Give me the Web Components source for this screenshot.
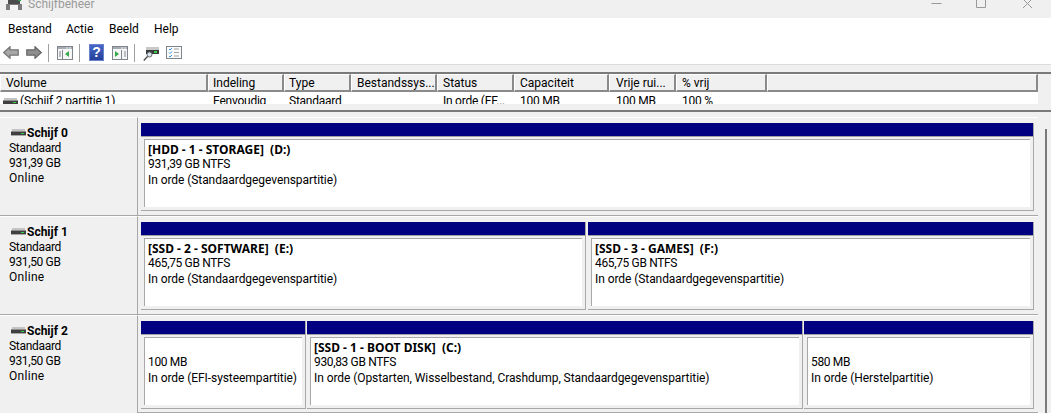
<!DOCTYPE html>
<html lang="nl"><head><meta charset="utf-8"><title>Schijfbeheer</title>
<style>
html,body{margin:0;padding:0;height:413px;overflow:hidden;background:#f0f0f0}
body{font:12px/15px Roboto,"Noto Sans",sans-serif;color:#000;display:flex;flex-direction:column}
</style></head><body>
<dm-titlebar label="Schijfbeheer"></dm-titlebar>
<dm-menubar></dm-menubar>
<dm-toolbar></dm-toolbar>
<dm-volume-table></dm-volume-table>
<dm-disk-pane>
  <dm-disk name="Schijf 0" size="931,39 GB" cols="893px">
    <dm-partition title-text="[HDD - 1 - STORAGE]  (D:)" size="931,39 GB NTFS" status="In orde (Standaardgegevenspartitie)"></dm-partition>
  </dm-disk>
  <dm-disk name="Schijf 1" size="931,50 GB" cols="445px 446px" gap="2px">
    <dm-partition title-text="[SSD - 2 - SOFTWARE]  (E:)" size="465,75 GB NTFS" status="In orde (Standaardgegevenspartitie)"></dm-partition>
    <dm-partition title-text="[SSD - 3 - GAMES]  (F:)" size="465,75 GB NTFS" status="In orde (Standaardgegevenspartitie)"></dm-partition>
  </dm-disk>
  <dm-disk name="Schijf 2" size="931,50 GB" cols="165px 496px 230px">
    <dm-partition size="100 MB" status="In orde (EFI-systeempartitie)"></dm-partition>
    <dm-partition title-text="[SSD - 1 - BOOT DISK]  (C:)" size="930,83 GB NTFS" status="In orde (Opstarten, Wisselbestand, Crashdump, Standaardgegevenspartitie)"></dm-partition>
    <dm-partition size="580 MB" status="In orde (Herstelpartitie)"></dm-partition>
  </dm-disk>
</dm-disk-pane>
<script>
const DISK_ICON=`<svg width="15" height="7" viewBox="0 0 15 7"><rect x="1" y="0" width="13" height="2" fill="#c4c4c4"/><rect x="0" y="2" width="15" height="1" fill="#8c8c8c"/><rect x="0" y="3" width="15" height="3" fill="#3f3f3f"/><rect x="10" y="4" width="3" height="1" fill="#38d048"/><rect x="0" y="6" width="15" height="1" fill="#a8a8a8"/></svg>`;
function el(name,render){customElements.define(name,class extends HTMLElement{connectedCallback(){if(this.shadowRoot)return;this.attachShadow({mode:'open'}).innerHTML=render(this)}})}

el('dm-titlebar',h=>`<style>
:host{display:flex;height:18px;overflow:hidden;background:#f0f0f0;flex:none;color:#9a9a9a}
.ic{margin:0 0 0 6px;flex:none}
.t{margin:-3px 0 0 6px;flex:1}
.b{width:45.5px;display:flex;justify-content:center;flex:none}
svg{display:block}
</style>
<svg class="ic" width="16" height="10" viewBox="0 0 16 10"><rect x="2" y="0" width="12" height="4" fill="#4c4c4c"/><rect x="12" y="0" width="3" height="1" fill="#2f9f4f"/><rect x="0" y="4" width="16" height="6" fill="#7c7c7c"/><rect x="4" y="5" width="8" height="5" fill="#f6f6f6"/></svg>
<span class="t">${h.getAttribute('label')}</span>
<span class="b" style="width:46px"><svg width="11" height="8" viewBox="0 0 11 8"><path d="M0.5 3.5h10" stroke="#999" fill="none"/></svg></span>
<span class="b"><svg width="11" height="8" viewBox="0 0 11 8"><path d="M.5 0v7.500h9V0" stroke="#999" fill="none"/></svg></span>
<span class="b" style="margin-right:1px"><svg width="11" height="9" viewBox="0 0 11 9"><path d="M1 -1l9 9M10 -1l-9 9" stroke="#999" fill="none"/></svg></span>`);

el('dm-menubar',h=>`<style>
:host{display:flex;height:23px;background:#fff;flex:none;align-items:center;padding-left:8px}
span{flex:none}
</style><span style="width:58px">Bestand</span><span style="width:43px">Actie</span><span style="width:45px">Beeld</span><span>Help</span>`);

el('dm-toolbar',h=>{
const win=(arrow)=>`<svg width="16" height="14" viewBox="0 0 16 14"><rect x=".5" y=".5" width="15" height="13" fill="#f6f6f6" stroke="#7f858c"/><rect x="1" y="1" width="14" height="2" fill="#a6acb4"/><path d="M9 2h2M12 2h2" stroke="#eee"/>${arrow}</svg>`;
return `<style>
:host{display:flex;height:23px;background:#fff;flex:none;align-items:center;padding-left:3px;border-bottom:1px solid #dcdcdc}
svg{display:block;flex:none}
.s{width:1px;height:18px;background:#a0a0a0;flex:none}
.h{width:13px;height:15px;flex:none;background:linear-gradient(#4567c8,#24409a);outline:1px solid #6a82cc;color:#fff;font:bold 14px/15px "Liberation Sans",sans-serif;text-align:center;margin:0 9px 0 10px}
</style>
<svg width="16" height="13" viewBox="0 0 16 13"><path d="M.8 6.500L7 .8V3.800H15.200V9.200H7V12.200Z" fill="#a8a8a8" stroke="#767676" stroke-width="1.300"/></svg>
<svg style="margin-left:7px" width="16" height="13" viewBox="0 0 16 13"><path d="M15.200 6.500L9 .8V3.800H.8V9.200H9V12.200Z" fill="#8e8e8e" stroke="#6a6a6a" stroke-width="1.300"/></svg>
<span class="s" style="margin-left:6px"></span>
<span style="margin-left:8px">${win(`<path d="M5.500 4v9M2 6h2M2 8h2M2 10h2" stroke="#7f858c" fill="none"/><path d="M12 5v6L8 8z" fill="#35a848"/>`)}</span>
<span class="s" style="margin-left:6px"></span>
<span class="h">?</span>
${win(`<path d="M9.500 4v9M12 6h2M12 8h2M12 10h2" stroke="#7f858c" fill="none"/><path d="M3 5v6l4-3z" fill="#35a848"/>`)}
<span class="s" style="margin-left:6px"></span>
<svg style="margin-left:8px" width="16" height="16" viewBox="0 0 16 16"><path d="M.8 15.500L5 11" stroke="#555" stroke-width="1.500"/><rect x="3" y="2" width="13" height="3" fill="#c8c8c8"/><rect x="3" y="5" width="13" height="4" fill="#3a3a3a"/><rect x="11" y="6" width="3" height="2" fill="#35d04a"/><circle cx="6.500" cy="9.500" r="2.500" fill="#d6e6f5" stroke="#6a6a6a"/></svg>
<svg style="margin-left:7px" width="16" height="13" viewBox="0 0 16 13"><rect x=".5" y=".5" width="15" height="12" fill="#fafafa" stroke="#7f858c"/><path d="M3 3l1 1 2-2M3 6.500l1 1 2-2M3 10l1 1 2-2" stroke="#3d8fd8" fill="none"/><path d="M8 3h5M8 6.500h5M8 10h5" stroke="#a0a0a0" fill="none"/></svg>`});

el('dm-volume-table',h=>{
const cols=[[208,'Volume',6],[76,'Indeling',5],[67,'Type',5],[86,'Bestandssys...',6],[77,'Status',6],[95,'Capaciteit',6],[67,'Vrije rui...',7],[91,'% vrij',6],[271,'',0]];
const row=['','Eenvoudig','Standaard','','In orde (EF...','100 MB','100 MB','100 %',''];
return `<style>
:host{display:block;flex:none;margin-top:7px;height:40px;border-top:2px solid #7a7a7a;border-bottom:2px solid #7a7a7a;box-sizing:border-box;overflow:hidden;padding-right:13px}
.r{display:flex}
.c{box-sizing:border-box;flex:none;white-space:nowrap;overflow:hidden}
.hd .c{height:18px;line-height:17px;background:#f0f0f0;border-right:2px solid #8a8a8a;border-bottom:2px solid #8a8a8a;border-left:1px solid #fff;border-top:1px solid #fff}
.bd{background:#fff;height:12px;overflow:hidden}
.bd .c{line-height:15px;padding-top:2px;height:17px;letter-spacing:-.25px}
.bd .c:first-child{letter-spacing:-.15px}
svg{margin:0 2px 0 -3px}
</style>
<div class="r hd">${cols.map(c=>`<div class="c" style="width:${c[0]}px;padding-left:${c[2]-1}px">${c[1]}</div>`).join('')}</div>
<div class="r bd">${cols.map((c,i)=>`<div class="c" style="width:${c[0]}px;padding-left:${c[2]}px">${i==0?DISK_ICON+'(Schijf 2 partitie 1)':row[i]}</div>`).join('')}</div>`});

el('dm-disk-pane',h=>`<style>
:host{display:block;flex:1;min-height:0;overflow:hidden;padding:5px 0 0;position:relative;background:#f0f0f0}
.w{width:1038px}
.sb{position:absolute;right:4px;top:17px;bottom:0;width:2px;background:#7a7a7a}
</style><div class="w"><slot></slot></div><div class="sb"></div>`);

el('dm-disk',h=>`<style>
:host{display:grid;grid-template-columns:138px 1fr;height:99px;box-sizing:border-box;border-bottom:1px solid #a8a8a8}
:host(:last-of-type){height:98px;border-bottom:0}
:host(:last-of-type) .v{height:98px;box-sizing:border-box;border-bottom:1px solid #a8a8a8}
.l{background:#f0f0f0;border-top:1px solid #fff;border-right:1px solid #a8a8a8;padding:8px 0 0 9px;box-sizing:border-box;height:98px}
.n{font-weight:bold;display:flex;align-items:center;height:15px;margin-left:2px}
.n svg{margin-right:1px;margin-top:-3px}
.st{letter-spacing:-.3px}.sz{letter-spacing:-.35px}.on{letter-spacing:.3px}
.v{padding:5px 0 0 3px;border-top:1px solid #fff}
.g{display:grid;grid-template-columns:${h.getAttribute('cols')};column-gap:${h.getAttribute('gap')||'1px'}}
</style>
<div class="l"><div class="n">${DISK_ICON}<span>${h.getAttribute('name')}</span></div><div class="st">Standaard</div><div class="sz">${h.getAttribute('size')}</div><div class="on">Online</div></div>
<div class="v"><div class="g"><slot></slot></div></div>`);

el('dm-partition',h=>`<style>
:host{display:block;height:88px;box-sizing:border-box;border-right:1px solid #a8a8a8;border-bottom:1px solid #a8a8a8;min-width:0}
.b{height:13px;background:#000080;border-bottom:1px solid #a0a0a0}
.o{height:73px;padding:2px 3px 3px 3px;box-sizing:border-box;background:#f0f0f0}
.i{height:100%;box-sizing:border-box;background:#fff;border-top:1px solid #a8a8a8;border-left:1px solid #a8a8a8;padding:2px 0 0 3px;white-space:nowrap;overflow:hidden}
.t{font-weight:bold;height:15px;white-space:pre;font-family:"Noto Sans",Roboto,sans-serif}
.z{letter-spacing:-.35px}
.s{margin-top:1px;letter-spacing:-.07px}
</style><div class="b"></div><div class="o"><div class="i"><div class="t">${h.getAttribute('title-text')||''}</div><div class="z">${h.getAttribute('size')}</div><div class="s">${h.getAttribute('status')}</div></div></div>`);
</script>
</body></html>
